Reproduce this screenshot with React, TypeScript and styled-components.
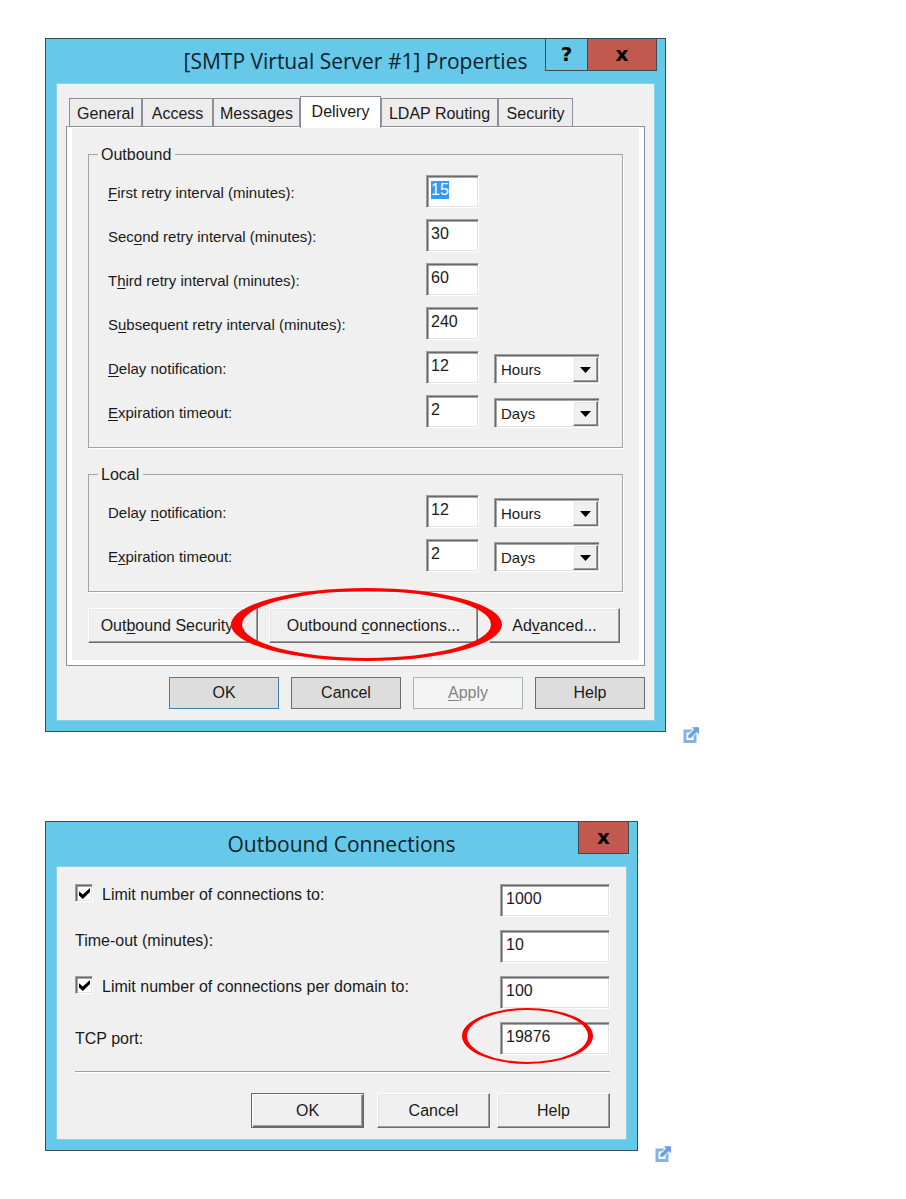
import React, { useEffect, useId, useRef } from 'react';
import styled, { createGlobalStyle, css } from 'styled-components';

const uiFont = `"Liberation Sans", Arial, sans-serif`;

const GlobalStyle = createGlobalStyle`
  *, *::before, *::after { box-sizing: border-box; }
  body {
    margin: 0;
    background: #fff;
    color: #1a1a1a;
    font: 16px/20px ${uiFont};
  }
  button, input, select { font: inherit; color: inherit; margin: 0; }
  u { text-underline-offset: 2px; text-decoration-thickness: 1px; text-decoration-skip-ink: none; }
`;

const Page = styled.main`
  display: flex;
  flex-direction: column;
  gap: 78px;
  padding: 38px 45px;
`;

const Figure = styled.div`
  display: flex;
  align-items: flex-end;
  gap: 17px;
`;

const Dialog = styled.section<{ $width: number }>`
  flex: 0 1 ${(p) => p.$width}px;
  margin-bottom: 11px;
  padding: 0 11px 11px;
  background: #66c9ea;
  border: 1px solid #3a4b52;
`;

const TitleBar = styled.header`
  display: grid;
  grid-template-columns: minmax(0, 1fr) auto minmax(0, 1fr);
  height: 45px;
  margin-right: -3px;
  margin-left: -3px;
`;

const Title = styled.h1`
  grid-column: 2;
  margin: 0;
  font: 400 21px/45px "Open Sans", "Noto Sans", sans-serif;
  color: #10222a;
  white-space: nowrap;
`;

const Caption = styled.div`
  display: flex;
  justify-content: flex-end;
  align-items: flex-start;
`;

const CaptionButton = styled.button<{ $width: number; $close?: boolean }>`
  width: ${(p) => p.$width}px;
  height: 32px;
  padding: 0 0 2px;
  border: 1px solid #3c4a52;
  border-top: 0;
  background: ${(p) => (p.$close ? '#c1594f' : 'transparent')};
  color: #000;
  font: 700 20px/24px "DejaVu Sans", sans-serif;
  & + & { margin-left: -1px; }
`;

const Client = styled.div<{ $pad: string }>`
  padding: ${(p) => p.$pad};
  background: #f0f0f0;
  box-shadow: 0 0 0 1px #8fcfe6;
`;

const TabList = styled.div`
  display: flex;
  align-items: flex-end;
  height: 30px;
  padding-left: 3px;
`;

const Tab = styled.button<{ $width: number; $active?: boolean }>`
  width: ${(p) => p.$width}px;
  height: 28px;
  padding: 2px 0 0;
  border: 1px solid #8c8e99;
  border-bottom: 0;
  background: #ececec;
  text-align: center;
  white-space: nowrap;
  ${(p) =>
    p.$active &&
    css`
      position: relative;
      height: 32px;
      margin-bottom: -2px;
      padding: 0 0 2px;
      background: #fff;
    `}
`;

const TabPanel = styled.div`
  display: flex;
  flex-direction: column;
  gap: 16px;
  margin-bottom: 11px;
  padding: 17px 21px 22px;
  border: 1px solid #8c8e99;
  box-shadow: inset 0 1px 0 #fff, inset 5px 0 0 #fff, inset -5px -5px 0 #fff;
`;

const Group = styled.fieldset`
  min-width: 0;
  margin: 0;
  padding: 11px 22px 18px 19px;
  border: 1px solid #a3a3a3;
  box-shadow: 1px 1px 0 #fff;
`;

const Legend = styled.legend`
  margin-left: -10px;
  padding: 1px 4px 0 3px;
  line-height: 19px;
`;

const FieldGrid = styled.div`
  display: flex;
  flex-direction: column;
  gap: 10px;
`;

const FieldRow = styled.div`
  display: grid;
  grid-template-columns: minmax(0, 1fr) 53px 106px;
  column-gap: 15px;
  height: 34px;
`;

const FieldLabel = styled.label`
  font-size: 15px;
  line-height: 36px;
  white-space: nowrap;
`;

const sunken = css`
  border: 1px solid;
  border-color: #a0a0a0 #fff #fff #a0a0a0;
  box-shadow: inset 1px 1px 0 #696969, inset 2px 2px 0 #a8a8a8, inset -1px -1px 0 #e3e3e3;
`;

const TextBox = styled.input<{ $inset?: number }>`
  display: block;
  width: 100%;
  height: 33px;
  padding: 4px 3px 7px ${(p) => p.$inset ?? 4}px;
  border-radius: 0;
  outline: 0;
  background: #fff;
  ${sunken}
  &::selection { background: #3399ff; color: #fff; }
`;

const SelectBox = styled.span`
  position: relative;
  display: block;
  align-self: center;
  height: 30px;
`;

const Select = styled.select`
  appearance: none;
  display: block;
  width: 100%;
  height: 30px;
  padding: 2px 28px 0 6px;
  border-radius: 0;
  outline: 0;
  background: #fff;
  font-size: 15px;
  ${sunken}
`;

const raised = css`
  border: 1px solid;
  border-color: #fff #6e6e6e #6e6e6e #fff;
  box-shadow: inset -1px -1px 0 #9a9a9a, inset 1px 1px 0 #e6e6e6;
  background: #f0f0f0;
`;

const Arrow = styled.span`
  position: absolute;
  top: 3px;
  right: 2px;
  display: grid;
  place-items: center;
  width: 25px;
  height: 25px;
  pointer-events: none;
  ${raised}
`;

const PanelButtons = styled.div`
  display: flex;
  gap: 11px;
`;

const ClassicButton = styled.button<{ $width: number; $default?: boolean }>`
  display: block;
  width: ${(p) => p.$width}px;
  height: 35px;
  padding: 0;
  border-radius: 0;
  white-space: nowrap;
  ${raised}
  ${(p) =>
    p.$default &&
    css`
      margin-right: 6px;
      border-color: #696969;
      box-shadow: inset 1px 1px 0 #fff, inset -1px -1px 0 #696969, inset -2px -2px 0 #a0a0a0;
    `}
`;

const Marked = styled.span`
  position: relative;
  display: block;
`;

const Ring = styled.svg<{ $top: number }>`
  position: absolute;
  top: ${(p) => p.$top}px;
  left: -38px;
  overflow: visible;
  pointer-events: none;
`;

const Footer = styled.div<{ $gap: number }>`
  display: flex;
  justify-content: flex-end;
  gap: ${(p) => p.$gap}px;
`;

const FlatButton = styled.button<{ $primary?: boolean }>`
  width: 110px;
  height: 32px;
  padding: 0;
  border: 1px solid ${(p) => (p.$primary ? '#3c7fb1' : '#707070')};
  border-radius: 0;
  background: #dddddd;
  &:disabled {
    border-color: #adb2b5;
    background: #f4f4f4;
    color: #838383;
  }
`;

const OptionList = styled.div`
  display: flex;
  flex-direction: column;
  gap: 13px;
`;

const OptionRow = styled.div<{ $middle?: boolean }>`
  display: grid;
  grid-template-columns: minmax(0, 1fr) 110px;
  align-items: ${(p) => (p.$middle ? 'center' : 'start')};
  min-height: 33px;
`;

const OptionLabel = styled.label`
  display: flex;
  align-items: flex-start;
  gap: 9px;
  line-height: 22px;
  white-space: nowrap;
`;

const CheckBox = styled.span`
  position: relative;
  display: block;
  width: 18px;
  height: 18px;
  input {
    appearance: none;
    display: block;
    width: 18px;
    height: 18px;
    background: #fff;
    ${sunken}
  }
  svg { position: absolute; top: 4px; left: 4px; pointer-events: none; display: none; }
  input:checked + svg { display: block; }
`;

const Divider = styled.hr`
  height: 2px;
  margin: 16px 0 20px;
  border: 0;
  border-top: 1px solid #a0a0a0;
  background: #fff;
`;

const IconLink = styled.a`
  display: block;
  width: 16px;
  height: 16px;
  svg { display: block; }
`;

function ExternalLink() {
  return (
    <IconLink href="#" aria-label="Open image in new window">
      <svg width="16" height="16" viewBox="0 0 16 16">
        <rect x="2" y="4" width="10" height="10.5" fill="#fff" stroke="#86b3e6" strokeWidth="3" />
        <path d="M7 0H16V9L13.4 6.4L8.5 11.5H4.6V7.6L9.6 2.6Z" fill="#e4eefa" />
        <path d="M9 0.3H16V7L13.8 4.9L7.8 10.8H5.3V8.4L11.3 2.6Z" fill="#6a9fe0" />
      </svg>
    </IconLink>
  );
}

type RingProps = { width: number; height: number; side: number; edge: number; top: number };

function RedRing({ width, height, side, edge, top }: RingProps) {
  const oval = (rx: number, ry: number) =>
    `M${width / 2 - rx} ${height / 2}a${rx} ${ry} 0 1 0 ${rx * 2} 0a${rx} ${ry} 0 1 0 ${-rx * 2} 0Z`;
  return (
    <Ring $top={top} width={width} height={height} aria-hidden="true">
      <path fill="#fe0000" fillRule="evenodd" d={oval(width / 2, height / 2) + oval(width / 2 - side, height / 2 - edge)} />
    </Ring>
  );
}

type FieldProps = { label: React.ReactNode; value: string; unit?: string; selected?: boolean };

function Field({ label, value, unit, selected }: FieldProps) {
  const id = useId();
  const box = useRef<HTMLInputElement>(null);
  useEffect(() => {
    if (selected) {
      box.current?.focus();
      box.current?.select();
    }
  }, [selected]);
  return (
    <FieldRow>
      <FieldLabel htmlFor={id}>{label}</FieldLabel>
      <TextBox ref={box} id={id} defaultValue={value} />
      {unit && (
        <SelectBox>
          <Select defaultValue={unit} aria-label="Unit">
            <option>Minutes</option>
            <option>Hours</option>
            <option>Days</option>
          </Select>
          <Arrow>
            <svg width="11" height="6" viewBox="0 0 11 6">
              <path d="M0 0H11L5.5 6Z" fill="#000" />
            </svg>
          </Arrow>
        </SelectBox>
      )}
    </FieldRow>
  );
}

type OptionProps = { label: string; value: string; check?: boolean; marked?: boolean };

function Option({ label, value, check, marked }: OptionProps) {
  const id = useId();
  const box = <TextBox id={`${id}v`} $inset={5} defaultValue={value} aria-label={label} />;
  return (
    <OptionRow $middle={marked}>
      <OptionLabel htmlFor={check ? `${id}c` : `${id}v`}>
        {check && (
          <CheckBox>
            <input type="checkbox" id={`${id}c`} defaultChecked />
            <svg width="11" height="11" viewBox="0 0 11 11">
              <path d="M0 3.2L3.8 6.6L11 0V4L3.8 11L0 7.4Z" fill="#000" />
            </svg>
          </CheckBox>
        )}
        {label}
      </OptionLabel>
      {marked ? (
        <Marked>
          {box}
          <RedRing width={131} height={56} side={5} edge={2} top={-14} />
        </Marked>
      ) : (
        box
      )}
    </OptionRow>
  );
}

export default function App() {
  return (
    <>
      <GlobalStyle />
      <Page>
        <Figure>
          <Dialog $width={621}>
            <TitleBar>
              <Title>[SMTP Virtual Server #1] Properties</Title>
              <Caption>
                <CaptionButton $width={43}>?</CaptionButton>
                <CaptionButton $width={70} $close>x</CaptionButton>
              </Caption>
            </TitleBar>
            <Client $pad="12px 9px 11px">
              <TabList role="tablist">
                <Tab role="tab" $width={73}>General</Tab>
                <Tab role="tab" $width={71}>Access</Tab>
                <Tab role="tab" $width={87}>Messages</Tab>
                <Tab role="tab" $width={81} $active aria-selected>Delivery</Tab>
                <Tab role="tab" $width={117}>LDAP Routing</Tab>
                <Tab role="tab" $width={75}>Security</Tab>
              </TabList>
              <TabPanel role="tabpanel">
                <Group>
                  <Legend>Outbound</Legend>
                  <FieldGrid>
                    <Field label={<><u>F</u>irst retry interval (minutes):</>} value="15" selected />
                    <Field label={<>Sec<u>o</u>nd retry interval (minutes):</>} value="30" />
                    <Field label={<>T<u>h</u>ird retry interval (minutes):</>} value="60" />
                    <Field label={<>S<u>u</u>bsequent retry interval (minutes):</>} value="240" />
                    <Field label={<><u>D</u>elay notification:</>} value="12" unit="Hours" />
                    <Field label={<><u>E</u>xpiration timeout:</>} value="2" unit="Days" />
                  </FieldGrid>
                </Group>
                <Group>
                  <Legend>Local</Legend>
                  <FieldGrid>
                    <Field label={<>Delay <u>n</u>otification:</>} value="12" unit="Hours" />
                    <Field label={<>E<u>x</u>piration timeout:</>} value="2" unit="Days" />
                  </FieldGrid>
                </Group>
                <PanelButtons>
                  <ClassicButton $width={170}>Out<u>b</u>ound Security...</ClassicButton>
                  <Marked>
                    <ClassicButton $width={209}>Outbound <u>c</u>onnections...</ClassicButton>
                    <RedRing width={271} height={73} side={11} edge={3} top={-20} />
                  </Marked>
                  <ClassicButton $width={131}>Ad<u>v</u>anced...</ClassicButton>
                </PanelButtons>
              </TabPanel>
              <Footer $gap={12}>
                <FlatButton $primary>OK</FlatButton>
                <FlatButton>Cancel</FlatButton>
                <FlatButton disabled><u>A</u>pply</FlatButton>
                <FlatButton>Help</FlatButton>
              </Footer>
            </Client>
          </Dialog>
          <ExternalLink />
        </Figure>

        <Figure>
          <Dialog $width={593}>
            <TitleBar>
              <Title>Outbound Connections</Title>
              <Caption>
                <CaptionButton $width={51} $close>x</CaptionButton>
              </Caption>
            </TitleBar>
            <Client $pad="17px 16px 11px 18px">
              <OptionList>
                <Option label="Limit number of connections to:" value="1000" check />
                <Option label="Time-out (minutes):" value="10" />
                <Option label="Limit number of connections per domain to:" value="100" check />
                <Option label="TCP port:" value="19876" marked />
              </OptionList>
              <Divider />
              <Footer $gap={7}>
                <ClassicButton $width={113} $default>OK</ClassicButton>
                <ClassicButton $width={113}>Cancel</ClassicButton>
                <ClassicButton $width={113}>Help</ClassicButton>
              </Footer>
            </Client>
          </Dialog>
          <ExternalLink />
        </Figure>
      </Page>
    </>
  );
}
